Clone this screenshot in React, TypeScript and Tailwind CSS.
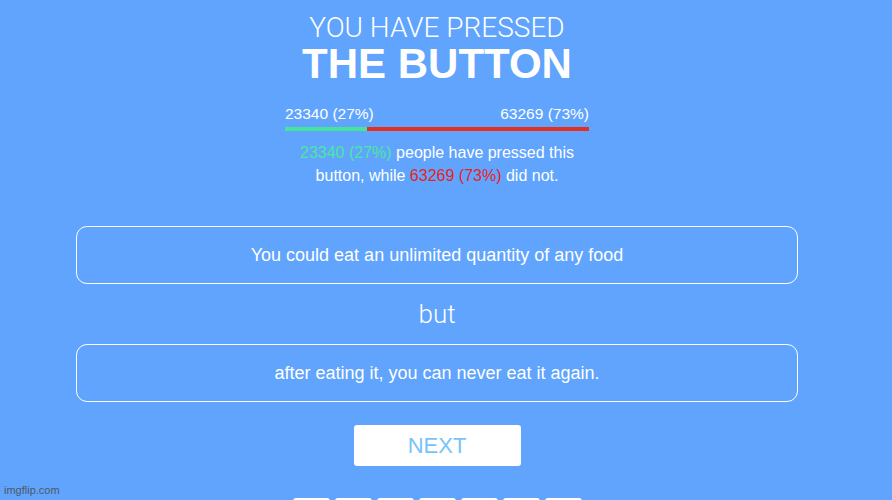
export default function App() {
  const pressed = 23340
  const notPressed = 63269
  const total = pressed + notPressed
  const pct = Math.round((pressed / total) * 100)

  return (
    <div
      className="relative h-screen overflow-hidden bg-[#60a4fd] text-white"
      style={{ fontFamily: '"Liberation Sans", Arial, sans-serif' }}
    >
      <div className="flex w-[874px] flex-col items-center pt-[14px]">
        {/* Heading */}
        <h2
          className="text-[28px] leading-[28px] font-light"
          style={{ fontFamily: 'Roboto, "Liberation Sans", sans-serif' }}
        >
          YOU HAVE PRESSED
        </h2>
        <h1 className="text-[42px] leading-[44px] font-bold">THE BUTTON</h1>

        {/* Vote split */}
        <div className="mt-[19px] w-[304px]">
          <div className="flex justify-between text-[15.5px] leading-[18px]">
            <span>23340 (27%)</span>
            <span>63269 (73%)</span>
          </div>
          <div className="mt-[4px] flex h-[4px] w-full">
            <div className="h-full bg-[#45e39b]" style={{ width: `${pct}%` }} />
            <div className="h-full flex-1 bg-[#e6301f]" />
          </div>
        </div>

        <div className="mt-[10px] flex flex-col items-center text-[16px] leading-[23px]">
          <div>
            <span className="text-[#4ce79f]">23340 (27%)</span> people have pressed this
          </div>
          <div>
            button, while <span className="text-[#e8231b]">63269 (73%)</span> did not.
          </div>
        </div>

        {/* Dilemma */}
        <div className="mt-[39px] flex h-[58px] w-[722px] items-center justify-center rounded-[11px] border border-white text-[18px]">
          You could eat an unlimited quantity of any food
        </div>
        <div
          className="my-[14px] text-[26px] leading-[32px] font-light"
          style={{ fontFamily: 'Roboto, "Liberation Sans", sans-serif' }}
        >
          but
        </div>
        <div className="flex h-[58px] w-[722px] items-center justify-center rounded-[11px] border border-white text-[18px]">
          after eating it, you can never eat it again.
        </div>

        <button className="mt-[23px] flex h-[41px] w-[167px] items-center justify-center rounded-[3px] bg-white text-[22px] text-[#79c3f8]">
          NEXT
        </button>

        {/* Share buttons */}
        <div className="mt-[32px] flex shrink-0 gap-[5px]">
          {[0, 1, 2, 3, 4, 5, 6].map((i) => (
            <div key={i} className="h-[30px] w-[37px] rounded-[3px] bg-white" />
          ))}
        </div>
      </div>

      <span className="absolute bottom-[3px] left-[4px] text-[11px] leading-[14px] text-[#4d5866]">imgflip.com</span>
    </div>
  )
}
